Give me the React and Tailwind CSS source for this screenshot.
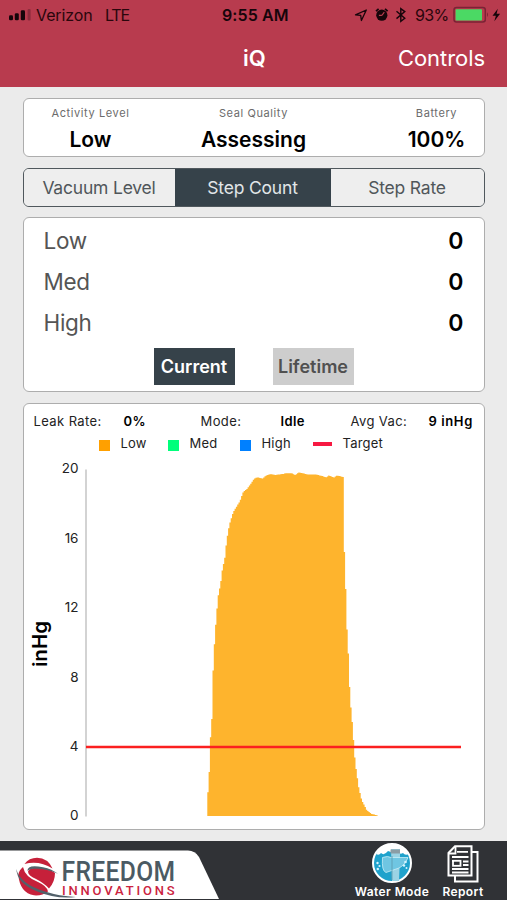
import React, { useState } from "react";

// [x, y] outline of the vacuum readings, y is on the pixel scale of the chart
const readings = [
  [207.5, 797], [209, 781], [210, 745], [212, 717], [212.7, 681], [214, 651],
  [216, 621], [218, 597], [220.7, 583], [222.3, 570], [225, 557], [226.7, 540],
  [229.3, 525], [233.3, 512], [240, 501], [243.3, 491.7], [247, 489], [250, 485],
  [254, 479], [257, 477.3], [263, 478.5], [266, 475.5], [271, 474], [275, 475],
  [283, 474], [286, 473.3], [292, 473.3], [295, 475], [299, 472.5], [302, 473],
  [308, 474.5], [316, 474.5], [322, 476], [326, 477.5], [329, 475.5], [334, 477.5],
  [337, 475.5], [343.3, 477], [344, 541], [345.3, 573], [346.7, 623], [348.7, 660],
  [350, 697], [352.7, 727], [354, 747], [355.3, 763], [358.7, 787], [361.7, 800],
  [366.7, 810], [371.7, 814], [378, 815.5],
];

const BASE = 816;
const BAR = 1.3;

const heightAt = (x) => {
  const i = readings.findIndex((p) => p[0] > x);
  if (i <= 0) return readings[i === 0 ? 0 : readings.length - 1][1];
  const [x0, y0] = readings[i - 1];
  const [x1, y1] = readings[i];
  return y0 + ((y1 - y0) * (x - x0)) / (x1 - x0);
};

const buildBars = () => {
  let d = `M207.3 ${BASE}`;
  for (let x = 207.3; x < 377; x += BAR) {
    d += `V${heightAt(x + BAR / 2).toFixed(1)}h${BAR}`;
  }
  return d + `V${BASE}Z`;
};

const ticks = [20, 16, 12, 8, 4, 0];

const StatusBar = () => (
  <div className="flex h-[30px] items-center pl-2 pr-1 text-[#2a060c]">
    <svg width="24" height="12" viewBox="0 0 24 12" fill="#16050a">
      <rect x="1" y="6.3" width="4" height="5" rx="1.3" />
      <rect x="6.8" y="4.2" width="4" height="7.1" rx="1.3" />
      <rect x="12.8" y="1.2" width="4.2" height="10.1" rx="1.3" />
      <rect x="19.6" y="0" width="3" height="11.5" rx="1" fill="#8d2c3d" />
    </svg>
    <span className="ml-1 w-[69px] text-[16px] tracking-[-0.1px]">Verizon</span>
    <span className="w-[117px] text-[16px] tracking-[-1.2px]">LTE</span>
    <span className="w-[131px] text-[16px] font-semibold tracking-[0.1px] text-[#16050a]">9:55 AM</span>
    <svg width="55" height="18" viewBox="353 6 55 18" fill="none" stroke="#16050a">
      <path d="M355.5 14.9 366.3 10 361.4 20.5 360.7 15.4Z" strokeWidth="1.3" strokeLinejoin="round" />
      <circle cx="381.8" cy="15.2" r="5.6" fill="#16050a" stroke="none" />
      <path d="M376 11.2l2.6-2.4M387.6 11.2l-2.6-2.4" strokeWidth="1.7" />
      <path d="M381.9 15.4l2.4-3.2M381.9 15.4h-3" stroke="#b93c4e" strokeWidth="1.1" />
      <path d="M396.5 11.2 404.8 18.2 400.8 21.3V8.6L404.8 11.6 396.5 18.6" strokeWidth="1.4" />
    </svg>
    <span className="ml-[7px] w-[36px] whitespace-nowrap text-[16px] tracking-[-0.7px]">93%</span>
    <svg width="50" height="18" viewBox="451 6 50 18">
      <rect x="454" y="7.4" width="31.3" height="14.6" rx="2.5" fill="none" stroke="#7b2335" strokeWidth="1.5" />
      <rect x="455.6" y="9.2" width="26.4" height="11.3" rx="0.8" fill="#4bd964" />
      <path d="M487 12.2q2 2.4 0 4.8z" fill="#7b2335" />
      <path d="M497.8 8.7 492.5 15.7h3.4l-1.6 5.5 5.8-7.5h-3.5z" fill="#16050a" />
    </svg>
  </div>
);

const Header = () => (
  <header className="h-[87px] bg-[#b83b4e]">
    <StatusBar />
    <div className="grid h-14 grid-cols-[1fr_120px_1fr] items-center pl-6 pr-[22px] text-white">
      <span />
      <h1 className="text-center text-[22px] font-semibold">iQ</h1>
      <button className="text-right text-[22px] tracking-[-0.05px]">Controls</button>
    </div>
  </header>
);

const Stat = ({ label, value, className }) => (
  <div className={`flex flex-col items-center ${className}`}>
    <span className="text-[11px] leading-4 tracking-[0.6px] text-[#6b6b6b]">{label}</span>
    <span className="mt-[5px] text-[21px] font-semibold leading-7 text-black">{value}</span>
  </div>
);

const Row = ({ label }) => (
  <div className="flex h-[41px] items-center justify-between pl-5 pr-5">
    <span className="pb-[2px] text-[22.5px] tracking-[-0.3px] text-[#555]">{label}</span>
    <span className="text-[23px] font-semibold text-black">0</span>
  </div>
);

const Chart = () => (
  <svg className="block" width="460" height="374" viewBox="24 454 460 374">
    <path d="M86 469.5V816.5" stroke="#cfcfcf" strokeWidth="1.8" />
    <path d={buildBars()} fill="#feb42d" />
    <path d="M86 747H461" stroke="#fb2020" strokeWidth="2.3" />
    {ticks.map((t) => (
      <text key={t} x="78.5" y={820.4 - t * 17.35} textAnchor="end" fontSize="13.5" fill="#222">
        {t}
      </text>
    ))}
    <text transform="translate(47.3 667) rotate(-90)" fontSize="20" fontWeight="600" textLength="46" lengthAdjust="spacingAndGlyphs">
      inHg
    </text>
  </svg>
);

const Logo = () => (
  <svg width="220" height="50" viewBox="0 850 220 50">
    <path d="M0 850.5H188Q195 850.5 199 857L219 899H0Z" fill="#fff" />
    <path d="M24.5 864Q29 857.8 37 857.7Q48 858 52.5 868.5Q39 860 24.5 864Z" fill="#c6203a" />
    <path d="M28 871.5Q30 866.5 42 868.2Q51 869.5 55 873Q55 882 49 888.5Q44 883 36 879Q28 875.5 28 871.5Z" fill="#c6203a" />
    <path d="M18.3 875Q19 870 23 867Q25 877 38 882Q47 886 48 891.5Q42 896 34 895.3Q20 893 18.3 875Z" fill="#c6203a" />
    <path d="M27.5 871Q27 864 43 867.2Q52 869 58 873.8Q45 868 34 868.8Q28.5 869.3 27.5 871Z" fill="#52616a" />
    <path d="M16.3 869Q20 884 45 891.5Q59 896 76 897Q56 899.5 36 891Q17 883 16.3 869Z" fill="#52616a" />
    <text x="61.5" y="880.8" fontFamily="Roboto, sans-serif" fontSize="28" fontWeight="500" fill="#4b5a63" textLength="114" lengthAdjust="spacingAndGlyphs">
      FREEDOM
    </text>
    <text x="62" y="894.7" fontFamily="Roboto, sans-serif" fontSize="13" fontWeight="500" fill="#cb2340" textLength="113">
      INNOVATIONS
    </text>
  </svg>
);

const WaterIcon = () => (
  <svg width="40" height="40" viewBox="0 0 40 40">
    <circle cx="20" cy="20" r="19" fill="#1fa2cc" stroke="#fff" strokeWidth="2" />
    <path d="M4 11Q10 0 20 1Q31 0 37 11Q33 13 31 10Q28 12 26 9Q20 10 16 8Q12 13 9 10Q7 13 4 11Z" fill="#fff" />
    <path d="M19 6h9v7l-1 25h-7z" fill="#9bd3e4" />
    <path d="M18.5 6.5h9.5v4h-9.5z" fill="#8b9da5" />
    <path d="M10.5 14.5Q16 12.5 19 14.5H36Q33 22 27 25L14 29.5Q9.5 28 10.5 14.5Z" fill="#6fc6e2" stroke="#c8edf6" strokeWidth="0.8" />
    <path d="M20 13v24" stroke="#5f9db2" strokeWidth="0.9" />
    <g fill="#d5f4ff">
      <circle cx="5.5" cy="20" r="1.2" />
      <circle cx="7.5" cy="23" r="1.1" />
      <circle cx="5.8" cy="26" r="1.2" />
      <circle cx="33.5" cy="19" r="1.3" />
      <circle cx="32" cy="22.5" r="1.2" />
      <circle cx="34.5" cy="25" r="1" />
    </g>
  </svg>
);

const ReportIcon = () => (
  <svg width="32" height="38" viewBox="0 0 32 38" fill="none" stroke="#fff" strokeWidth="2">
    <path d="M25 7H30.5V36.5H8V31" />
    <path d="M8 1.2H24.5V30.5H1.5V8Z" fill="#303236" />
    <path d="M8.5 1.5V8.5H2M10 6.8h11M5 12h16.5M5 16h2M16 16.5h5.5M16 20h5.5M5 24h16.5M5 27.5h16.5" strokeWidth="1.8" />
    <rect x="6" y="15.8" width="7.5" height="5" strokeWidth="1.8" />
  </svg>
);

const tabs = [
  { name: "Vacuum Level", width: "w-[151px]" },
  { name: "Step Count", width: "w-[156px]" },
  { name: "Step Rate", width: "flex-1" },
];

const App = () => {
  const [tab, setTab] = useState("Step Count");
  const [range, setRange] = useState("Current");

  return (
    <div className="flex h-[900px] w-[507px] flex-col overflow-hidden bg-[#ebebeb] font-['Inter',sans-serif]">
      <Header />

      <main className="flex flex-1 flex-col px-[22.5px] pt-[11px]">
        {/* Status card */}
        <section className="flex h-[59px] shrink-0 rounded-md border-[1.5px] border-[#adadad] bg-white pt-[6px]">
          <Stat label="Activity Level" value="Low" className="w-[134px]" />
          <Stat label="Seal Quality" value="Assessing" className="w-[192px]" />
          <Stat label="Battery" value="100%" className="ml-auto w-[94px]" />
        </section>

        {/* Tabs */}
        <nav className="mt-[11px] flex h-[39px] shrink-0 overflow-hidden rounded-md border-[1.5px] border-[#50585d]">
          {tabs.map(({ name, width }) => (
            <button
              key={name}
              onClick={() => setTab(name)}
              className={`${width} pt-[2px] text-[17.5px] tracking-[-0.2px] ${
                tab === name ? "bg-[#36424a] text-[#e2e6e8]" : "bg-[#eee] text-[#50565a]"
              }`}
            >
              {name}
            </button>
          ))}
        </nav>

        {/* Step counts */}
        <section className="mt-[10px] h-[175px] shrink-0 rounded-md border-[1.5px] border-[#adadad] bg-white pt-[3px]">
          <Row label="Low" />
          <Row label="Med" />
          <Row label="High" />
          <div className="mt-1 flex justify-center gap-[38px]">
            {["Current", "Lifetime"].map((name) => (
              <button
                key={name}
                onClick={() => setRange(name)}
                className={`h-[37px] w-[81px] text-[18px] font-semibold ${
                  range === name ? "bg-[#36424a] text-white" : "bg-[#cdcdcd] text-[#505050]"
                }`}
              >
                {name}
              </button>
            ))}
          </div>
        </section>

        {/* Vacuum chart */}
        <section className="mt-[11px] h-[427px] shrink-0 rounded-md border-[1.5px] border-[#adadad] bg-white">
          <div className="flex h-[28px] items-end whitespace-nowrap pl-[10px] text-[13px] leading-[22px] tracking-[0.4px] text-[#222]">
            <span className="w-[90px]">Leak Rate:</span>
            <b className="w-[77px] font-semibold text-black">0%</b>
            <span className="w-[80px]">Mode:</span>
            <b className="w-[70px] font-semibold text-black">Idle</b>
            <span className="w-[78px]">Avg Vac:</span>
            <b className="font-semibold tracking-[0.6px] text-black">9 inHg</b>
          </div>
          <div className="flex h-[22px] items-center pl-[75px] pt-px text-[13px] tracking-[0.2px] text-[#222]">
            <i className="mr-[11px] mt-[3px] h-[11px] w-[11px] bg-[#ffa000]" />
            <span className="w-[47px]">Low</span>
            <i className="mr-[11px] mt-[3px] h-[11px] w-[11px] bg-[#00ff7b]" />
            <span className="w-[50px]">Med</span>
            <i className="mr-[11px] mt-[3px] h-[11px] w-[11px] bg-[#0080ff]" />
            <span className="w-[51px]">High</span>
            <i className="mr-[11px] h-[4px] w-[19px] bg-[#f71942]" />
            <span>Target</span>
          </div>
          <Chart />
        </section>
      </main>

      <footer className="flex h-[59px] shrink-0 items-end bg-[#303236] text-[12px] font-semibold leading-[14px] tracking-[0.4px] text-white">
        <Logo />
        <button className="ml-[132px] flex w-[80px] flex-col items-center whitespace-nowrap">
          <WaterIcon />
          <span className="mb-px mt-[2px]">Water Mode</span>
        </button>
        <button className="ml-[5px] flex w-[52px] flex-col items-center">
          <ReportIcon />
          <span className="mb-px mt-[2px]">Report</span>
        </button>
      </footer>
    </div>
  );
};

export default App;
